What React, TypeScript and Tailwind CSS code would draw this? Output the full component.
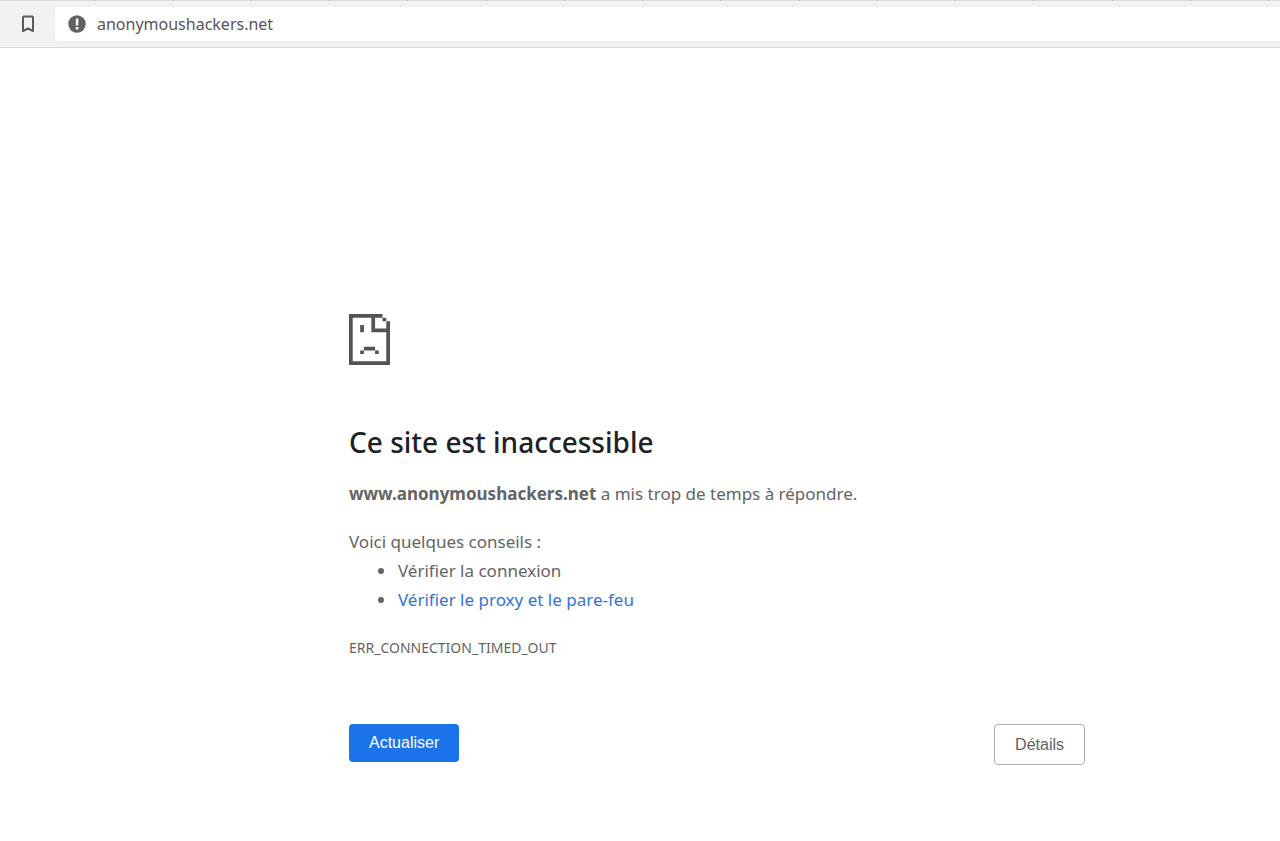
import type { ReactNode } from "react";

const tabs = Array.from({ length: 16 }, (_, i) => i);

function BookmarkIcon() {
  return (
    <svg width="12" height="18" viewBox="0 0 12 18" fill="none" stroke="#5a5b5f" strokeWidth="2" strokeLinejoin="round">
      <path d="M1 2.5Q1 1.5 2 1.5H10Q11 1.5 11 2.5V16L6 13.5L1 16Z" />
    </svg>
  );
}

function AlertIcon() {
  return (
    <svg width="18" height="18" viewBox="0 0 18 18">
      <circle cx="9" cy="9" r="8.7" fill="#5f6165" />
      <rect x="7.8" y="3.6" width="2.5" height="7" rx="0.4" fill="#fff" />
      <rect x="7.8" y="12" width="2.5" height="2.4" rx="0.4" fill="#fff" />
    </svg>
  );
}

// page triste, dessinée sur une grille de 11 x 14 cases
function SadPageIcon() {
  return (
    <svg width="41" height="51" viewBox="0 0 11 14" preserveAspectRatio="none" fill="#535353" aria-hidden="true">
      <path d="M0 0H9V1H7V4H10V2H11V14H0ZM1 1V13H10V5H6V1Z" fillRule="evenodd" />
      <path d="M9 1h1v1h-1zM3 3h1v2h-1zM4 9h3v1h-3zM3 10h1v1h-1zM7 10h1v1h-1z" />
    </svg>
  );
}

function Tip({ children }: { children: ReactNode }) {
  return <li className="pl-[1px]">{children}</li>;
}

export default function App() {
  return (
    <div className="min-h-screen bg-white font-['Noto_Sans',sans-serif] text-[#646464]">
      <header className="border-b border-[#d8d8d8] bg-[#f2f2f2]">
        <div className="flex h-px bg-[#dcdcdc] pl-[17px] pr-[11px]">
          {tabs.map((tab) => (
            <div key={tab} className="flex-1 border-r border-[#b4b4b4]" />
          ))}
        </div>
        <div className="flex items-center pt-[6px] pb-[6px]">
          <button type="button" aria-label="Ajouter aux favoris" className="flex w-[55px] justify-center">
            <BookmarkIcon />
          </button>
          <div className="flex h-[34px] flex-1 items-center gap-[11px] rounded-l bg-white pl-[13px]">
            <AlertIcon />
            <input
              type="text"
              aria-label="Adresse"
              defaultValue="anonymoushackers.net"
              className="min-w-0 flex-1 bg-transparent text-base text-[#55565a] outline-none"
            />
          </div>
        </div>
      </header>

      <main className="pl-[154px] pt-[266px]">
        <div className="mx-auto max-w-[736px]">
          <SadPageIcon />
          <h1 className="mt-[57px] text-[28px] leading-[40px] font-medium text-[#202124]">
            Ce site est inaccessible
          </h1>
          <p className="mt-[17px] text-[17px] leading-[29px]">
            <strong className="font-bold">www.anonymoushackers.net</strong> a mis trop de temps à répondre.
          </p>
          <div className="mt-[19px] text-[17px] leading-[29px]">
            <p>Voici quelques conseils :</p>
            <ul className="list-disc pl-[48px]">
              <Tip>Vérifier la connexion</Tip>
              <Tip>
                <a href="#proxy" className="text-[#3572d6]">Vérifier le proxy et le pare-feu</a>
              </Tip>
            </ul>
          </div>
          <p className="mt-[20px] text-sm leading-[28px]">ERR_CONNECTION_TIMED_OUT</p>
          <div className="mt-[62px] flex items-start justify-between font-['Liberation_Sans',sans-serif] text-base">
            <button type="button" className="h-[38px] rounded bg-[#1a73e8] px-5 text-white">
              Actualiser
            </button>
            <button type="button" className="h-[41px] rounded border border-[#a9abae] px-5">
              Détails
            </button>
          </div>
        </div>
      </main>
    </div>
  );
}
